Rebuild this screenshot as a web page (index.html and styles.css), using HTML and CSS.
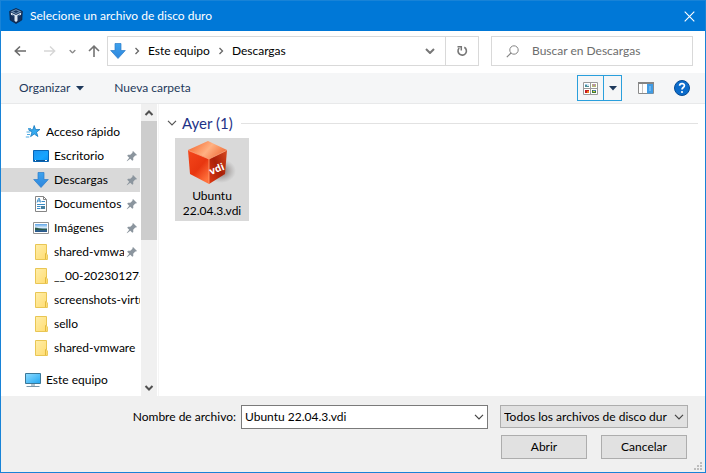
FILE: index.html
```html
<!DOCTYPE html>
<html lang="es">
<head>
<meta charset="utf-8">
<title>Selecione un archivo de disco duro</title>
<link rel="stylesheet" href="styles.css">
</head>
<body>
<svg class="defs" aria-hidden="true">
  <defs>
    <linearGradient id="gArrow" x1="0" y1="0" x2="0" y2="1"><stop offset="0" stop-color="#3ca2ee"/><stop offset="1" stop-color="#2f86dc"/></linearGradient>
    <linearGradient id="gFolder" x1="0" y1="0" x2="1" y2="1"><stop offset="0" stop-color="#ffeeaa"/><stop offset="1" stop-color="#ffdc70"/></linearGradient>
    <linearGradient id="gScreen" x1="0" y1="0" x2="1" y2="1"><stop offset="0" stop-color="#1d93f0"/><stop offset="0.6" stop-color="#16a5ff"/><stop offset="1" stop-color="#0a8df0"/></linearGradient>
    <linearGradient id="gPc" x1="0" y1="0" x2="1" y2="1"><stop offset="0" stop-color="#8fdcff"/><stop offset="1" stop-color="#22a7f2"/></linearGradient>
    <linearGradient id="gSky" x1="0" y1="0" x2="0" y2="1"><stop offset="0" stop-color="#5ea5e8"/><stop offset="0.5" stop-color="#e6f3fb"/><stop offset="0.6" stop-color="#3b6f80"/><stop offset="1" stop-color="#265590"/></linearGradient>
  </defs>
  <symbol id="down" viewBox="0 0 16 16"><path d="M5 .5h6v7h4.300L8 15.500.700 7.500H5z" fill="url(#gArrow)" stroke="#2b7bc9" stroke-width=".7"/></symbol>
  <symbol id="folder" viewBox="0 0 16 16"><path d="M2.500 .5h11V10l.9 1v4.500H2.500z" fill="url(#gFolder)" stroke="#e9c654"/><path d="M12.500 15V9.500l1-1" fill="none" stroke="#e3bb3f"/></symbol>
  <symbol id="pin" viewBox="0 0 12 12"><path d="M7 1l4 4-1 .6-.8-.1-2 2.200.1 2.200-1 .9L4.300 8.800 1 11.300.7 11l2.500-3.300L1.200 5.700l.9-1 2.200.1 2.200-2-.1-.8z" fill="#8b959e"/></symbol>
  <symbol id="crumb" viewBox="0 0 6 8"><path d="M1.500 1l3 3-3 3" fill="none" stroke="#666" stroke-width="1.300"/></symbol>
  <symbol id="chev" viewBox="0 0 10 6"><path d="M1 .8l4 4 4-4" fill="none" stroke="currentColor" stroke-width="1.200"/></symbol>
  <symbol id="chevbold" viewBox="0 0 10 6"><path d="M1 1l4 4 4-4" fill="none" stroke="currentColor" stroke-width="2"/></symbol>
</svg>

<div class="dialog">
  <header class="titlebar">
    <svg class="logo" viewBox="0 0 14 16"><path d="M7 .5l6.300 2.800-.5 8.700L7 15.500 1.200 12 .7 3.300z" fill="#14315c" stroke="#0d2448" stroke-width=".8"/><path d="M1.500 3.500L7 1.200l5.500 2.300L7 6z" fill="#6f93b8"/><path d="M4 3.600L7 2.300l3 1.300L7 5z" fill="#173863"/><path d="M1.800 4.500L7 7l5.200-2.500-.2 2.300-3.500 1.700v4.300L7 14l-1.500-1.200V8.500L2 6.800z" fill="#dce8f3"/><path d="M3.200 6.300l2.300 1.200v1.400L3.400 7.800zM10.800 6.300L8.500 7.500v1.400l2.100-1.100z" fill="#244a78"/></svg>
    <h1>Selecione un archivo de disco duro</h1>
    <button class="plain close" type="button" aria-label="Cerrar"><svg viewBox="0 0 11 11"><path d="M.7.7l9.600 9.600M10.300.7L.7 10.300" stroke="#fff" stroke-width="1.100"/></svg></button>
  </header>

  <nav class="nav">
    <button class="plain arrow" type="button" aria-label="Atrás"><svg viewBox="0 0 12 12"><path d="M6 1.500L1.300 6 6 10.500M1.500 6H12" fill="none" stroke="#6b6b6b" stroke-width="1.600"/></svg></button>
    <button class="plain arrow forward" type="button" aria-label="Adelante"><svg viewBox="0 0 12 12"><path d="M6 1.500L10.700 6 6 10.500M10.500 6H0" fill="none" stroke="#d6d6d6" stroke-width="1.400"/></svg></button>
    <button class="plain recent" type="button" aria-label="Ubicaciones recientes"><svg viewBox="0 0 10 6"><use href="#chevbold"/></svg></button>
    <button class="plain arrow up" type="button" aria-label="Subir"><svg viewBox="0 0 12 12"><path d="M1 6l5-4.800L11 6M6 1.500V12" fill="none" stroke="#737373" stroke-width="1.600"/></svg></button>
    <div class="address">
      <svg class="i16"><use href="#down"/></svg>
      <svg class="crumb"><use href="#crumb"/></svg>
      <a href="#">Este equipo</a>
      <svg class="crumb"><use href="#crumb"/></svg>
      <a href="#">Descargas</a>
      <button class="plain drop" type="button" aria-label="Ubicaciones anteriores"><svg viewBox="0 0 10 6"><use href="#chevbold"/></svg></button>
      <button class="plain refresh" type="button" aria-label="Actualizar"><svg viewBox="0 0 12 12"><path d="M8.300 2.300A4.200 4.200 0 1 1 3.200 3" fill="none" stroke="#777" stroke-width="1.600"/><path d="M1.500 1.700h3.800v3.800" fill="none" stroke="#777" stroke-width="1.500"/></svg></button>
    </div>
    <label class="search">
      <svg viewBox="0 0 13 13"><circle cx="8" cy="5" r="4.200" fill="none" stroke="#858585"/><path d="M5 8L.8 12.200" stroke="#858585" stroke-width="1.200"/></svg>
      <input type="search" placeholder="Buscar en Descargas" aria-label="Buscar en Descargas">
    </label>
  </nav>

  <div class="toolbar">
    <button class="plain" type="button">Organizar <svg class="caret" viewBox="0 0 8 5"><path d="M0 0h8L4 4.500z" fill="#1e395b"/></svg></button>
    <button class="plain" type="button">Nueva carpeta</button>
    <div class="views">
      <button class="plain grid" type="button" aria-label="Cambiar la vista"><svg viewBox="0 0 15 13"><path d="M.5.500h14v12H.500zM7.500.500v12M.500 6.500h14" fill="#fff" stroke="#9a9a9a"/><path d="M2 2h4v1H2z" fill="#9fcdf0"/><path d="M2 3h4v2H2z" fill="#4b8f96"/><path d="M4 2h2v2H4z" fill="#d4e6f2"/><path d="M9 2h4v3H9z" fill="#b5ba73"/><path d="M10 2h2v2h-2z" fill="#b98bb0"/><path d="M2 8h4v3H2z" fill="#c71b20"/><path d="M4 9h2v2H4z" fill="#ef8421"/><path d="M9 8h4v3H9z" fill="#3d7a36"/><path d="M10 8h3v1h-3z" fill="#4c79bc"/><path d="M10 9h2v1h-2z" fill="#d6cc42"/></svg></button>
      <button class="plain more" type="button" aria-label="Más opciones"><svg class="caret" viewBox="0 0 8 5"><path d="M0 0h8L4 4.500z" fill="#1e395b"/></svg></button>
    </div>
    <button class="plain pane" type="button" aria-label="Panel de vista previa"><svg viewBox="0 0 16 12"><path d="M.5.500h15v11H.500z" fill="#fff" stroke="#8a8a8a"/><path d="M0 0h16v2H0z" fill="#858585"/><path d="M4.500 2v9" stroke="#c4c4c4"/><path d="M9 2h6v9.500H9z" fill="#3f9ce5"/><path d="M11 4h2v5h-2z" fill="#6db4f0"/></svg></button>
    <button class="plain help" type="button" aria-label="Ayuda"><svg viewBox="0 0 16 16"><circle cx="8" cy="8" r="7.500" fill="#0b6ccb" stroke="#064b93"/><path d="M5.600 5.800C5.700 2.800 10.500 2.900 10.400 5.700 10.300 7.500 8 7.600 8 9.500" fill="none" stroke="#fff" stroke-width="1.700"/><circle cx="8" cy="12" r="1.100" fill="#fff"/></svg></button>
  </div>

  <div class="content">
    <aside class="sidebar">
      <ul class="tree">
        <li class="root"><svg class="i16" viewBox="0 0 16 16"><path d="M9.200 1.500l1.400 4.100 4.300-.1-3.400 2.700 1.400 4.300-3.600-2.500-3.700 2.600 1.400-4.400L3.500 5.700h4.300z" fill="#35aaf0" stroke="#1577bd" stroke-width=".8"/><path d="M3 4.500h3M1.500 8h3.500M2 10.500h3M.800 13h3.500" stroke="#4eaae2"/></svg><span>Acceso rápido</span></li>
        <li><svg class="i16" viewBox="0 0 16 16"><path d="M.5 2.500h15v11H.500z" fill="url(#gScreen)" stroke="#0765b5"/><path d="M1 12h14v1H1z" fill="#0b5697"/><path d="M2 12h1v1H2zM12 12h2v1h-2z" fill="#fff"/></svg><span>Escritorio</span><svg class="pin"><use href="#pin"/></svg></li>
        <li class="selected"><svg class="i16"><use href="#down"/></svg><span>Descargas</span><svg class="pin"><use href="#pin"/></svg></li>
        <li><svg class="i16" viewBox="0 0 16 16"><path d="M2.500.500h8l3 3v12h-11z" fill="#fff" stroke="#858585"/><path d="M10.500.500v3h3" fill="none" stroke="#858585"/><path d="M4 6.500l1.500-4h1l.8 4M4.500 5h3M8.500 5.500H12M4 8.500h8M4 10.500h3.500M4 12.500h3.500" fill="none" stroke="#3c8cc5"/><path d="M8 10h4v3H8z" fill="#477f9e"/></svg><span>Documentos</span><svg class="pin"><use href="#pin"/></svg></li>
        <li><svg class="i16" viewBox="0 0 16 16"><path d="M.5 2.500h15v11H.500z" fill="#fff" stroke="#929292"/><path d="M2 4h12v8H2z" fill="url(#gSky)"/><path d="M2 7.500c3 .2 5 1.700 12 1.700V10H2z" fill="#2c5947"/></svg><span>Imágenes</span><svg class="pin"><use href="#pin"/></svg></li>
        <li><svg class="i16"><use href="#folder"/></svg><span>shared-vmware</span><svg class="pin"><use href="#pin"/></svg></li>
        <li><svg class="i16"><use href="#folder"/></svg><span>__00-20230127-c</span></li>
        <li><svg class="i16"><use href="#folder"/></svg><span>screenshots-virtu</span></li>
        <li><svg class="i16"><use href="#folder"/></svg><span>sello</span></li>
        <li><svg class="i16"><use href="#folder"/></svg><span>shared-vmware</span></li>
        <li class="root computer"><svg class="i16" viewBox="0 0 16 16"><path d="M.5 1.500h15v10H.500z" fill="url(#gPc)" stroke="#3c7898"/><path d="M6 12h4v2H6z" fill="#b4c5cf"/><path d="M1.500 14.500h13" stroke="#7996a8"/></svg><span>Este equipo</span></li>
      </ul>
      <div class="scrollbar">
        <svg viewBox="0 0 10 6"><path d="M1.500 5L5 1.500 8.500 5" fill="none" stroke="#505050" stroke-width="2"/></svg>
        <div class="track"><div class="thumb"></div></div>
        <svg viewBox="0 0 10 6"><path d="M1.500 1L5 4.500 8.500 1" fill="none" stroke="#505050" stroke-width="2"/></svg>
      </div>
    </aside>
    <main class="files">
      <h2><svg viewBox="0 0 10 6"><use href="#chev"/></svg>Ayer (1)</h2>
      <button class="plain file" type="button">
        <svg viewBox="0 0 52 48">
          <defs>
            <linearGradient id="cTop" x1="0" y1="0.300" x2="1" y2="0.700"><stop offset="0" stop-color="#f56b32"/><stop offset=".5" stop-color="#ffb182"/><stop offset="1" stop-color="#ef6934"/></linearGradient>
            <linearGradient id="cLeft" x1="0" y1="0" x2=".7" y2="1"><stop offset="0" stop-color="#f4471b"/><stop offset=".6" stop-color="#e83610"/><stop offset="1" stop-color="#ff713c"/></linearGradient>
            <linearGradient id="cRight" x1="1" y1="0" x2="0" y2="1"><stop offset="0" stop-color="#d94b20"/><stop offset=".5" stop-color="#a92008"/><stop offset="1" stop-color="#e23a12"/></linearGradient>
            <radialGradient id="cShade"><stop offset="0" stop-color="#5b3c35" stop-opacity=".75"/><stop offset="1" stop-color="#777" stop-opacity="0"/></radialGradient>
          </defs>
          <ellipse cx="35" cy="31" rx="15" ry="12" fill="url(#cShade)"/>
          <path d="M2 10L22 1l19 9-18 9z" fill="url(#cTop)"/>
          <path d="M2 10l21 9v25L4 34z" fill="url(#cLeft)"/>
          <path d="M23 19l18-9-2 24-16 10z" fill="url(#cRight)"/>
          <path d="M2.500 10.500L23 19l17.500-8.500M23 19v25" fill="none" stroke="#ffa174" stroke-width=".8"/>
          <text class="cube-label" transform="translate(25 35) rotate(-22)">vdi</text>
        </svg>
        <span>Ubuntu 22.04.3.vdi</span>
      </button>
    </main>
  </div>

  <footer class="footer">
    <label for="filename">Nombre de archivo:</label>
    <div class="combo">
      <input id="filename" type="text" value="Ubuntu 22.04.3.vdi">
      <button class="plain" type="button" aria-label="Mostrar nombres"><svg viewBox="0 0 10 6"><use href="#chev"/></svg></button>
    </div>
    <div class="filter">
      <select aria-label="Tipo de archivo"><option>Todos los archivos de disco dur</option></select>
      <svg viewBox="0 0 10 6"><use href="#chev"/></svg>
    </div>
    <div class="actions">
      <button type="button">Abrir</button>
      <button type="button">Cancelar</button>
    </div>
    <svg class="grip" viewBox="0 0 8 8"><path d="M6 0h2v2H6zM3 3h2v2H3zM6 3h2v2H6zM0 6h2v2H0zM3 6h2v2H3zM6 6h2v2H6z" fill="#bdbdbd"/></svg>
  </footer>
</div>
</body>
</html>
```
FILE: styles.css
```css
* { box-sizing: border-box; }
body { margin: 0; font: 12px/16px "Lato", "Open Sans", sans-serif; color: #000; }
button, input, select { font: inherit; color: inherit; }
svg { display: block; flex: none; }
.defs { position: absolute; width: 0; height: 0; }
.plain { display: flex; align-items: center; justify-content: center; padding: 0; border: 0; background: none; }
.i16 { width: 16px; height: 16px; }

.dialog { display: flex; flex-direction: column; min-height: 100vh; border: 1px solid #1883d7; background: #fff; }

.titlebar { display: flex; align-items: center; height: 30px; padding: 0 10px 0 8px; background: #0078d7; color: #fff; }
.titlebar h1 { flex: 1; margin: 0 0 0 7px; font-size: 12px; font-weight: 400; }
.logo { width: 14px; height: 16px; }
.close svg { width: 11px; height: 11px; }

.nav { display: flex; align-items: center; height: 42px; padding: 0 12px 2px 13px; }
.arrow svg { width: 12px; height: 12px; }
.forward { margin-left: 18px; }
.recent { margin-left: 13px; color: #8b8b8b; }
.recent svg { width: 7px; height: 5px; }
.up { margin: 0 7px 0 12px; }
.address { display: flex; flex: 1; align-items: center; height: 30px; border: 1px solid #d9d9d9; padding-left: 2px; }
.address a { color: inherit; text-decoration: none; }
.crumb { width: 6px; height: 8px; margin: 0 8px; }
.drop { width: 30px; height: 28px; margin-left: auto; color: #777; }
.drop svg { width: 10px; height: 6px; }
.refresh { width: 33px; height: 28px; border-left: 1px solid #d9d9d9; }
.refresh svg { width: 12px; height: 12px; }
.search { display: flex; align-items: center; width: 202px; height: 30px; margin-left: 12px; padding-left: 14px; border: 1px solid #d9d9d9; }
.search svg { width: 13px; height: 13px; }
.search input { flex: 1; min-width: 0; margin-left: 13px; padding: 0; border: 0; outline: 0; background: none; }
.search input::placeholder { color: #6d6d6d; opacity: 1; }

.toolbar { display: flex; align-items: center; height: 31px; padding: 0 15px 0 18px; background: #f5f6f7; border-bottom: 1px solid #e8e9ea; color: #1e395b; }
.toolbar > .plain { margin-right: 30px; }
.caret { width: 8px; height: 5px; }
.toolbar > .plain .caret { margin-left: 6px; }
.views { display: flex; height: 26px; margin-left: auto; border: 1px solid #2a9fdc; }
.grid { width: 25px; }
.grid svg { width: 15px; height: 13px; }
.more { width: 18px; border-left: 1px solid #2a9fdc; }
.toolbar > .pane { margin: 0 20px 0 16px; }
.pane svg { width: 16px; height: 12px; }
.toolbar > .help { margin: 0; }
.help svg { width: 16px; height: 16px; }

.content { display: flex; flex: 1; }
.sidebar { display: flex; width: 156px; }
.tree { flex: 1; min-width: 0; margin: 0; padding: 16px 1px 0 0; list-style: none; }
.tree li { display: flex; align-items: center; height: 24px; padding: 0 0 0 32px; }
.tree span { flex: 1; min-width: 0; margin-left: 5px; overflow: hidden; white-space: nowrap; }
.tree .root { padding-left: 24px; }
.tree .computer { margin-top: 8px; }
.tree .selected { background: #d9d9d9; }
.pin { width: 12px; height: 12px; margin: 0 2px; }
.scrollbar { display: flex; flex-direction: column; align-items: center; width: 16px; background: #f0f0f0; }
.scrollbar svg { width: 10px; height: 6px; margin: 6px 0 5px; }
.track { flex: 1; width: 100%; }
.thumb { height: 46%; background: #cdcdcd; }

.files { flex: 1; margin-left: 1px; padding: 9px 7px 9px 8px; border-left: 1px solid #f5f5f5; }
.files h2 { display: flex; align-items: center; margin: 0 0 5px; font-size: 15px; line-height: 20px; font-weight: 400; color: #1e3287; }
.files h2 svg { width: 10px; height: 6px; margin-right: 5px; color: #555; }
.files h2::after { content: ""; flex: 1; height: 1px; margin-left: 8px; background: #e2e2e2; }
.file { flex-direction: column; justify-content: flex-start; width: 74px; height: 83px; margin-left: 8px; padding-top: 2px; background: #d9d9d9; line-height: 15px; }
.file > svg { width: 52px; height: 48px; }
.cube-label { font: bold 10px "Open Sans", sans-serif; fill: #fff; }

.footer { position: relative; display: grid; grid-template-columns: auto 247px 188px; justify-content: end; align-items: start; column-gap: 12px; row-gap: 6px; padding: 9px 17px 13px; background: #f0f0f0; }
.footer > label { margin-right: -7px; line-height: 24px; }
.combo { display: flex; height: 24px; border: 1px solid #7a7a7a; background: #fff; }
.combo input { flex: 1; min-width: 0; padding: 0 3px; border: 0; outline: 0; background: none; }
.combo button { width: 17px; color: #444; }
.combo svg, .filter svg { width: 10px; height: 6px; }
.filter { position: relative; height: 24px; }
.filter select { width: 100%; height: 23px; padding: 0 16px 0 3px; border: 1px solid #adadad; border-radius: 0; background: #e1e1e1; appearance: none; }
.filter svg { position: absolute; right: 4px; top: 9px; color: #444; pointer-events: none; }
.actions { grid-column: 3; display: grid; grid-template-columns: 1fr 1fr; gap: 14px; padding: 0 1px; }
.actions button { height: 24px; padding: 0; border: 1px solid #adadad; background: #e1e1e1; }
.grip { position: absolute; right: 3px; bottom: 2px; width: 8px; height: 8px; }
```
